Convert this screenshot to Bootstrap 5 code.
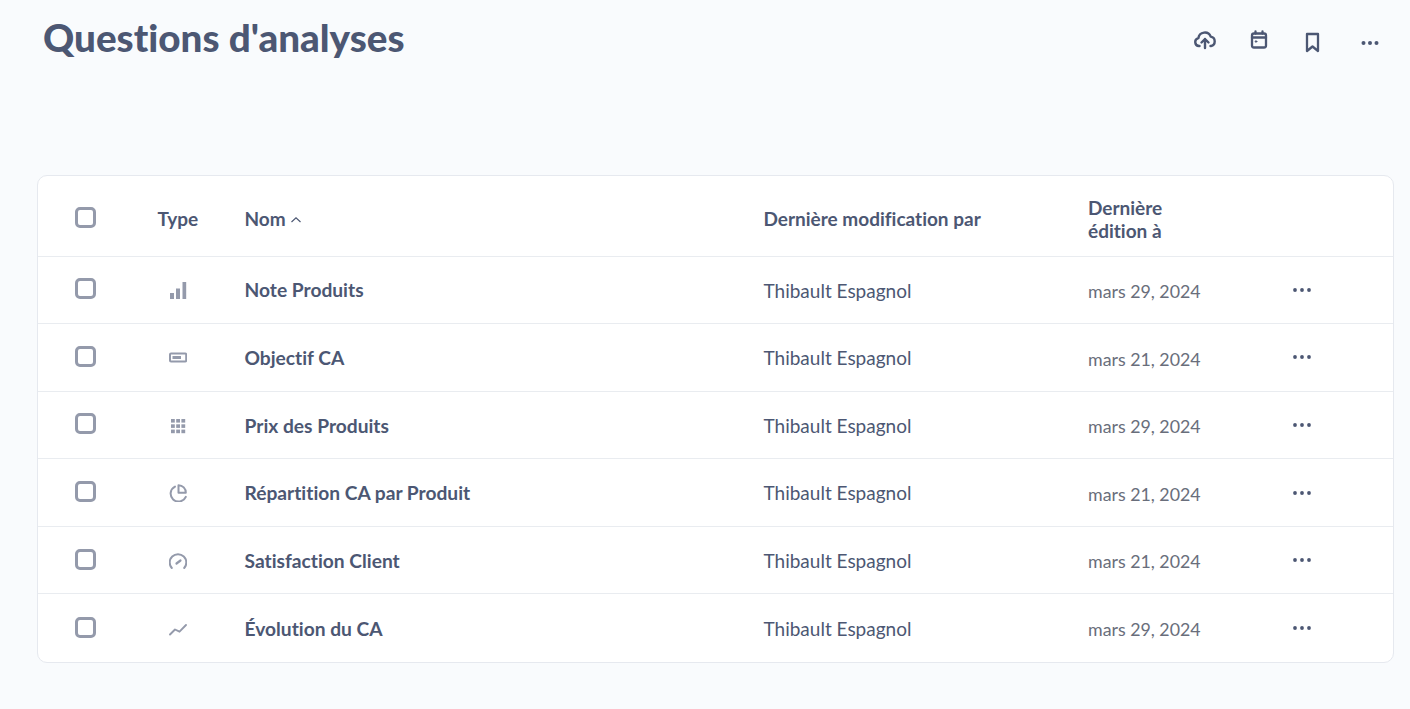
<!DOCTYPE html>
<html lang="fr">
<head>
<meta charset="utf-8">
<title>Questions d'analyses</title>
<link href="https://cdn.jsdelivr.net/npm/bootstrap@5.3.0/dist/css/bootstrap.min.css" rel="stylesheet">
<style>
html,body{height:100%;overflow:hidden}
body{background:#f9fbfd;font-family:Lato,"Liberation Sans",sans-serif;color:#4c5773;font-variant-ligatures:none}
.page-wrap{padding:0 16px 0 37px}
.head-bar{height:175px;align-items:flex-start}
.page-title{font-size:38.6px;font-weight:900;line-height:46px;color:#4c5773;margin:14px 0 0 6px}
.act-row{padding:29px 15px 0 0}
.act-row svg{display:block}
.act-row .a-cal{margin-left:34px}
.act-row .a-book{margin-left:36px}
.act-row .a-more{margin-left:39px}
.act-row .a-cloud{margin-top:-1px}
.frame{background:#fff;border:1px solid #e6e9ef;border-radius:10px;overflow:hidden}
.q-table{table-layout:fixed;width:100%;margin:0;border-collapse:collapse}
.q-table th,.q-table td{padding:0;vertical-align:middle;border-bottom:1px solid #e9ecf0;background:transparent;color:#4c5773}
.q-table tr:last-child td{border-bottom:0}
.q-table th{height:80px;font-size:19px;font-weight:700;line-height:23px;padding-top:6px}
.q-table th.c-box{padding-top:0}
.q-table td{height:67.6px;font-size:19px}
.q-table .c-name{font-weight:700;font-size:19.2px;padding-top:2px}
.q-table .c-by{font-size:19px;padding-top:2px}
.q-table .c-date{font-size:17.8px;color:#696e7b;padding-top:3px}
.box{display:block;width:21px;height:21px;margin:-2px 0 0 37px;border:3px solid #949aab;border-radius:5px;background:#fff}
.box.th-box{margin-top:3px}
.ico{display:block;margin:2px 0 0 11px}
.dots{display:block;margin-top:0}
.sort-ico{vertical-align:2px}
.ico.pie-ico{margin-top:0}
</style>
</head>
<body>
<div class="page-wrap">
  <div class="head-bar d-flex justify-content-between">
    <h1 class="page-title">Questions d'analyses</h1>
    <div class="act-row d-flex align-items-start">
      <svg class="a-cloud" width="22" height="24" viewBox="0 0 22 24" fill="none" stroke="#4c5773" stroke-width="2.400" stroke-linecap="round" stroke-linejoin="round"><path d="M5.500 18H5a4 4 0 0 1-.6-7.900A6.400 6.400 0 0 1 16.700 8.600 4.800 4.800 0 0 1 17 18h-.5"/><path d="M11 20v-9M7.500 14.500 11 11l3.500 3.500"/></svg>
      <svg class="a-cal" width="18" height="24" viewBox="0 0 18 24" fill="none" stroke="#4c5773" stroke-width="2.300" stroke-linecap="round" stroke-linejoin="round"><rect x="2" y="4.500" width="14" height="14" rx="2"/><path d="M2 8.500h14M5.500 2.500v2M12.500 2.500v2"/><circle cx="6" cy="12.500" r=".8" fill="#4c5773" stroke-width="1"/></svg>
      <svg class="a-book" width="18" height="24" viewBox="0 0 18 24" fill="none" stroke="#4c5773" stroke-width="2.300" stroke-linejoin="round"><path d="M3 5h11v17l-5.500-4.500L3 22z"/></svg>
      <svg class="a-more" width="18" height="24" viewBox="0 0 18 24" fill="#4c5773"><circle cx="2.500" cy="14" r="2"/><circle cx="9" cy="14" r="2"/><circle cx="15.500" cy="14" r="2"/></svg>
    </div>
  </div>
  <div class="frame">
    <table class="q-table">
      <colgroup><col style="width:119.500px"><col style="width:87px"><col style="width:519px"><col style="width:324.500px"><col style="width:205px"><col></colgroup>
      <thead>
        <tr><th class="c-box"><span class="box th-box"></span></th><th>Type</th><th>Nom <svg width="12" height="8" viewBox="0 0 12 8" fill="none" stroke="#4c5773" stroke-width="1.200" class="sort-ico"><path d="M1.500 6 6 1.800 10.500 6"/></svg></th><th>Dernière modification par</th><th>Dernière<br>édition à</th><th></th></tr>
      </thead>
      <tbody>
        <tr><td><span class="box"></span></td><td><svg class="ico" width="18" height="18" viewBox="0 0 18 18" fill="#949aab"><rect x="1" y="11" width="4" height="6"/><rect x="7" y="6.500" width="4" height="10.500"/><rect x="13.500" y="0" width="3.700" height="17"/></svg></td><td class="c-name">Note Produits</td><td class="c-by">Thibault Espagnol</td><td class="c-date">mars 29, 2024</td><td><svg class="dots" width="18" height="6" viewBox="0 0 18 6" fill="#4c5773"><circle cx="2" cy="3" r="1.900"/><circle cx="9" cy="3" r="1.900"/><circle cx="16" cy="3" r="1.900"/></svg></td></tr>
        <tr><td><span class="box"></span></td><td><svg class="ico" width="18" height="18" viewBox="0 0 18 18" fill="none" stroke="#949aab"><rect x="1" y="4.500" width="16.200" height="8" rx="1" stroke-width="2"/><rect x="3.500" y="7" width="8.500" height="3" fill="#949aab" stroke="none"/></svg></td><td class="c-name">Objectif CA</td><td class="c-by">Thibault Espagnol</td><td class="c-date">mars 21, 2024</td><td><svg class="dots" width="18" height="6" viewBox="0 0 18 6" fill="#4c5773"><circle cx="2" cy="3" r="1.900"/><circle cx="9" cy="3" r="1.900"/><circle cx="16" cy="3" r="1.900"/></svg></td></tr>
        <tr><td><span class="box"></span></td><td><svg class="ico" width="18" height="18" viewBox="0 0 18 18" fill="#949aab"><rect x="2" y="2" width="3.800" height="3.600"/><rect x="7.200" y="2" width="3.800" height="3.600"/><rect x="12.400" y="2" width="3.800" height="3.600"/><rect x="2" y="7.300" width="3.800" height="3.600"/><rect x="7.200" y="7.300" width="3.800" height="3.600"/><rect x="12.400" y="7.300" width="3.800" height="3.600"/><rect x="2" y="12.600" width="3.800" height="3.600"/><rect x="7.200" y="12.600" width="3.800" height="3.600"/><rect x="12.400" y="12.600" width="3.800" height="3.600"/></svg></td><td class="c-name">Prix des Produits</td><td class="c-by">Thibault Espagnol</td><td class="c-date">mars 29, 2024</td><td><svg class="dots" width="18" height="6" viewBox="0 0 18 6" fill="#4c5773"><circle cx="2" cy="3" r="1.900"/><circle cx="9" cy="3" r="1.900"/><circle cx="16" cy="3" r="1.900"/></svg></td></tr>
        <tr><td><span class="box"></span></td><td><svg class="ico pie-ico" width="18" height="18" viewBox="0 0 18 18" fill="none" stroke="#949aab" stroke-width="2" stroke-linejoin="round" stroke-linecap="round"><path d="M6 2.600a7.900 7.900 0 1 0 10.800 10.200"/><path d="M9.500 1.200a7.300 7.300 0 0 1 7.300 7.500H9.500z"/></svg></td><td class="c-name">Répartition CA par Produit</td><td class="c-by">Thibault Espagnol</td><td class="c-date">mars 21, 2024</td><td><svg class="dots" width="18" height="6" viewBox="0 0 18 6" fill="#4c5773"><circle cx="2" cy="3" r="1.900"/><circle cx="9" cy="3" r="1.900"/><circle cx="16" cy="3" r="1.900"/></svg></td></tr>
        <tr><td><span class="box"></span></td><td><svg class="ico" width="18" height="18" viewBox="0 0 18 18" fill="none" stroke="#949aab" stroke-width="2" stroke-linecap="round"><path d="M2.800 16a8.300 8.300 0 1 1 12.400 0"/><path d="M7.500 11.500 11.500 8.500" stroke-width="2.200"/></svg></td><td class="c-name">Satisfaction Client</td><td class="c-by">Thibault Espagnol</td><td class="c-date">mars 21, 2024</td><td><svg class="dots" width="18" height="6" viewBox="0 0 18 6" fill="#4c5773"><circle cx="2" cy="3" r="1.900"/><circle cx="9" cy="3" r="1.900"/><circle cx="16" cy="3" r="1.900"/></svg></td></tr>
        <tr><td><span class="box"></span></td><td><svg class="ico" width="18" height="18" viewBox="0 0 18 18" fill="none" stroke="#949aab" stroke-width="1.900" stroke-linecap="round" stroke-linejoin="round"><path d="M1 14.500l5-5 4.500 2.200L17 5"/></svg></td><td class="c-name">Évolution du CA</td><td class="c-by">Thibault Espagnol</td><td class="c-date">mars 29, 2024</td><td><svg class="dots" width="18" height="6" viewBox="0 0 18 6" fill="#4c5773"><circle cx="2" cy="3" r="1.900"/><circle cx="9" cy="3" r="1.900"/><circle cx="16" cy="3" r="1.900"/></svg></td></tr>
      </tbody>
    </table>
  </div>
</div>
</body>
</html>
